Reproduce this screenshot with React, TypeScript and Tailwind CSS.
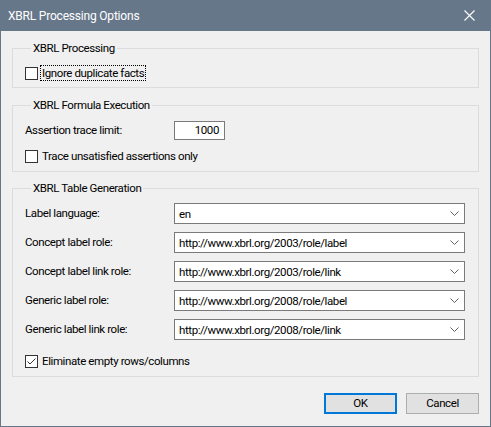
import React from 'react';

const font = { fontFamily: 'Roboto, "Noto Sans", sans-serif' };

const Checkbox: React.FC<{ label: string; checked?: boolean; focused?: boolean }> = ({ label, checked, focused }) => (
    <div className="flex items-center h-[16px]">
        <div className="w-[13px] h-[13px] border border-[#333333] bg-white flex items-center justify-center shrink-0">
            {checked && (
                <svg width="11" height="11" viewBox="0 0 11 11">
                    <path d="M1.5 5.5 L4 8 L9.5 2.5" fill="none" stroke="#333333" strokeWidth="1" />
                </svg>
            )}
        </div>
        <span className={`ml-[2px] px-[1px] leading-[14px] ${focused ? 'border border-dotted border-black' : 'border border-transparent'}`}>
            {label}
        </span>
    </div>
);

const Select: React.FC<{ value: string }> = ({ value }) => (
    <div className="w-[291px] h-[21px] border border-[#7a7a7a] bg-white flex items-center justify-between pl-[4px] pr-[5px]">
        <span className="leading-[16px]">{value}</span>
        <svg width="9" height="5" viewBox="0 0 9 5">
            <path d="M0.5 0.5 L4.5 4.5 L8.5 0.5" fill="none" stroke="#606060" strokeWidth="1" />
        </svg>
    </div>
);

const tableRows = [
    { label: 'Label language:', value: 'en' },
    { label: 'Concept label role:', value: 'http://www.xbrl.org/2003/role/label' },
    { label: 'Concept label link role:', value: 'http://www.xbrl.org/2003/role/link' },
    { label: 'Generic label role:', value: 'http://www.xbrl.org/2008/role/label' },
    { label: 'Generic label link role:', value: 'http://www.xbrl.org/2008/role/link' },
];

const App: React.FC = () => {
    return (
        <div
            className="w-[491px] h-[427px] flex flex-col border-x border-b border-[#67778a] bg-[#f0f0f0] text-[11.5px] tracking-[-0.4px] text-black"
            style={font}
        >
            {/* title bar */}
            <div className="h-[31px] shrink-0 bg-[#67778a] flex items-center justify-between pl-[8px] pr-[16px] -mx-px">
                <span className="text-white text-[12px] tracking-[-0.2px]">XBRL Processing Options</span>
                <svg width="11" height="11" viewBox="0 0 11 11">
                    <path d="M0.5 0.5 L10.5 10.5 M10.5 0.5 L0.5 10.5" stroke="#ffffff" strokeWidth="1.1" />
                </svg>
            </div>

            <div className="flex flex-col px-[11px] pt-[9px]">
                <fieldset className="border border-[#dcdcdc] pl-[12px] pt-[9px] pb-[6px]">
                    <legend className="ml-[6px] px-[2px] leading-[16px]">XBRL Processing</legend>
                    <Checkbox label="Ignore duplicate facts" focused />
                </fieldset>

                <fieldset className="mt-[9px] border border-[#dcdcdc] pl-[12px] pt-[8px] pb-[7px]">
                    <legend className="ml-[6px] px-[2px] leading-[16px]">XBRL Formula Execution</legend>
                    <div className="flex items-center h-[19px]">
                        <span className="w-[149px]">Assertion trace limit:</span>
                        <div className="w-[51px] h-[19px] border border-[#7a7a7a] bg-white flex items-center justify-end pr-[5px]">
                            1000
                        </div>
                    </div>
                    <div className="mt-[8px]">
                        <Checkbox label="Trace unsatisfied assertions only" />
                    </div>
                </fieldset>

                <fieldset className="mt-[8px] border border-[#dcdcdc] pl-[12px] pt-[7px] pb-[7px]">
                    <legend className="ml-[6px] px-[2px] leading-[16px]">XBRL Table Generation</legend>
                    <div className="flex flex-col gap-[8px]">
                        {tableRows.map((row) => (
                            <div key={row.label} className="flex items-center">
                                <span className="w-[149px]">{row.label}</span>
                                <Select value={row.value} />
                            </div>
                        ))}
                    </div>
                    <div className="mt-[13px]">
                        <Checkbox label="Eliminate empty rows/columns" checked />
                    </div>
                </fieldset>

                <div className="flex justify-end gap-[9px] mt-[16px]">
                    <button className="w-[73px] h-[21px] border-2 border-[#0078d7] bg-[#e1e1e1] flex items-center justify-center">
                        OK
                    </button>
                    <button className="w-[73px] h-[21px] border border-[#adadad] bg-[#e1e1e1] flex items-center justify-center">
                        Cancel
                    </button>
                </div>
            </div>
        </div>
    );
};

export default App;
